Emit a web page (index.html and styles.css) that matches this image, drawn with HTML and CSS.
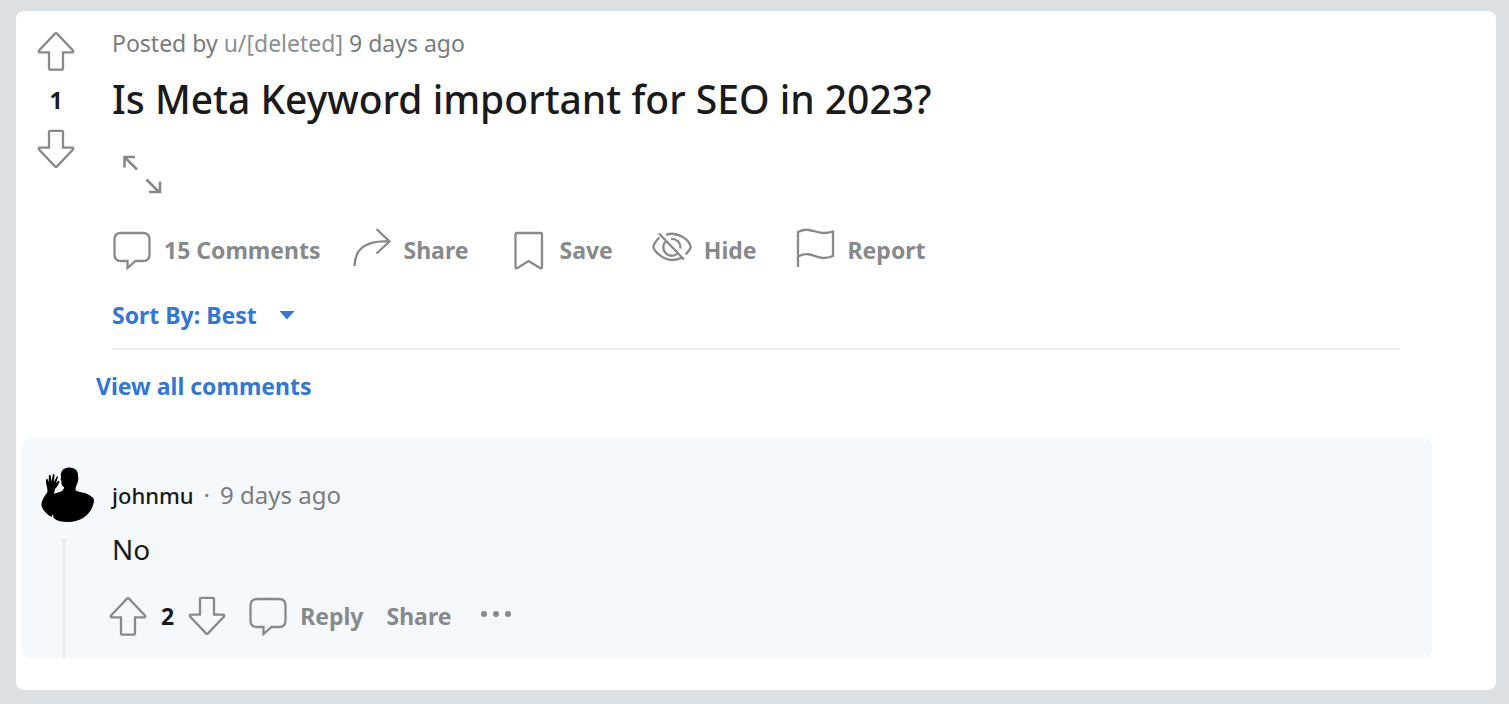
FILE: index.html
```html
<!DOCTYPE html>
<html lang="en">
<head>
    <meta charset="UTF-8">
    <meta name="viewport" content="width=device-width, initial-scale=1.0">
    <title>Is Meta Keyword important for SEO in 2023?</title>
    <link rel="stylesheet" href="styles.css">
</head>
<body>
    <!-- Shared icons -->
    <svg class="sprite" aria-hidden="true">
        <symbol id="arrow-up" viewBox="0 0 40 40">
            <path d="M19 2.6 Q20 1.6 21 2.6 L36.7 19.2 Q38 21.3 36 21.3 H27 V37 Q27 38.7 25.3 38.7 H14.7 Q13 38.7 13 37 V21.3 H4 Q2 21.3 3.3 19.2 Z"/>
        </symbol>
        <symbol id="arrow-down" viewBox="0 0 40 40">
            <path d="M19 37.4 Q20 38.4 21 37.4 L36.7 20.8 Q38 18.7 36 18.7 H27 V3 Q27 1.8 25.3 1.8 H14.7 Q13 1.8 13 3 V18.7 H4 Q2 18.7 3.3 20.8 Z"/>
        </symbol>
        <symbol id="bubble" viewBox="0 0 40 40">
            <path d="M9 3 H31 Q37.500 3 37.500 9.500 V24.500 Q37.500 31 31 31 H23.500 L15.500 38 V31 H9 Q2.500 31 2.500 24.500 V9.500 Q2.500 3 9 3 Z"/>
        </symbol>
    </svg>

    <main class="card">
        <article class="post">
            <div class="votes">
                <button class="icon-btn" type="button" aria-label="Upvote"><svg class="icon"><use href="#arrow-up"/></svg></button>
                <span class="score">1</span>
                <button class="icon-btn" type="button" aria-label="Downvote"><svg class="icon"><use href="#arrow-down"/></svg></button>
            </div>
            <div class="post-body">
                <p class="meta">Posted by <a class="author" href="#">u/[deleted]</a> 9 days ago</p>
                <h1 class="title">Is Meta Keyword important for SEO in 2023?</h1>
                <button class="icon-btn expand" type="button" aria-label="Expand">
                    <svg class="icon thick" viewBox="0 0 40 40"><path d="M15 15.500 L3.500 4 M2.500 13.500 V3 H13 M24.500 25.500 L36.500 37.500 M38 27.500 V38 H27"/></svg>
                </button>
                <div class="actions">
                    <button class="action comments" type="button"><svg class="icon"><use href="#bubble"/></svg>15 Comments</button>
                    <button class="action" type="button">
                        <svg class="icon" viewBox="0 0 40 40"><path d="M2.500 36 C3 20 12 10 37 11.500 M24.500 -1 L37.500 11.500 L24.500 23.500"/></svg>Share
                    </button>
                    <button class="action" type="button">
                        <svg class="icon" viewBox="0 0 40 40"><path d="M10 3 H33.500 Q35 3 35 4.500 V37 Q35 39 33 38 L21.500 31 L10.500 38 Q8.500 39 8.500 37 V4.500 Q8.500 3 10 3 Z"/></svg>Save
                    </button>
                    <button class="action" type="button">
                        <svg class="icon" viewBox="0 0 40 40"><path d="M7.500 7.500 C4 10.500 2 14 1.300 16.500 C2 22 12 30 20.500 30 C24 30 27 29 30 27.500 M14 4.800 C25 1 37 9 38.800 17 C38.300 19 36.500 22 33.500 24.200 M14 11 A8.300 8.300 0 1 0 25.500 23.500 M19 9 A8.300 8.300 0 0 1 28.300 18.500 M7 3.500 L32 29.500"/></svg>Hide
                    </button>
                    <button class="action" type="button">
                        <svg class="icon" viewBox="0 0 40 40"><path d="M2 37 V2 C16 -5 20 7 37 1.500 V26 C20 33 18 19 2 26.500"/></svg>Report
                    </button>
                </div>
                <div class="sort">
                    <button class="sort-btn" type="button">Sort By: Best
                        <svg class="caret" viewBox="0 0 16 10"><path d="M0.500 1 H15.500 L8 9.500 Z"/></svg>
                    </button>
                </div>
            </div>
        </article>

        <a class="view-all" href="#">View all comments</a>

        <section class="comment">
            <div class="thread">
                <svg class="avatar" viewBox="0 0 56 56" role="img" aria-label="johnmu">
                    <path d="M24 20 C22 19 21 17 21.500 14 C20 12 21 11 21 10 C20 4 24 0.500 29 0.500 C35 0.500 38.500 4 38 9 C38.800 12 38 14 37.500 16 C36.500 18.500 35.500 20 35.500 23 C37 25 42 25 45 26 C49 28 54 30 54 33 C53.500 43 45 55 28 55 C22 55 17 54 13.500 51 L13 47 L11.500 50 C6 47 3 43 1.500 39 C1 34 5 28 7 26 C8 24 7 20 6.500 18 C5.500 15 6 12 7 11.500 C8 12 8 14 8.500 15.500 L9 8 L10.500 8 L11.500 14.500 L13 7 L14.500 7.500 L14 15 L17 9 L18 10 L16 16 L19 13.500 L19.500 15 C18 18 17 20 15 22 L14 27 C18 25 24 25 24 20 Z"/>
                </svg>
                <div class="thread-line"></div>
            </div>
            <div class="comment-body">
                <p class="byline"><a class="user" href="#">johnmu</a><span>·</span><span>9 days ago</span></p>
                <p class="text">No</p>
                <div class="comment-actions">
                    <button class="icon-btn" type="button" aria-label="Upvote"><svg class="icon"><use href="#arrow-up"/></svg></button>
                    <span class="score">2</span>
                    <button class="icon-btn" type="button" aria-label="Downvote"><svg class="icon"><use href="#arrow-down"/></svg></button>
                    <button class="action reply" type="button"><svg class="icon"><use href="#bubble"/></svg>Reply</button>
                    <button class="action" type="button">Share</button>
                    <button class="icon-btn more" type="button" aria-label="More">
                        <svg class="icon dots" viewBox="0 0 40 40"><circle cx="8" cy="18" r="3"/><circle cx="20" cy="18" r="3"/><circle cx="32" cy="18" r="3"/></svg>
                    </button>
                </div>
            </div>
        </section>
    </main>
</body>
</html>
```
FILE: styles.css
```css
* { box-sizing: border-box; }
body { margin: 0; padding: 11px 13px 14px 16px; background-color: #dae0e4; color: #1a1a1b; font-family: "Noto Sans", sans-serif; font-size: 23px; line-height: 32px; }
p, h1 { margin: 0; }
a { color: inherit; text-decoration: none; }
button { padding: 0; border: 0; background: none; color: inherit; font: inherit; cursor: pointer; }

.sprite { position: absolute; width: 0; height: 0; }
.icon { flex: none; display: block; width: 40px; height: 40px; overflow: visible; fill: none; stroke: #878a8c; stroke-width: 2.3; }
.thick { stroke-width: 2.6; }
.dots { fill: #878a8c; stroke: none; }
.icon-btn { flex: none; display: block; width: 40px; height: 40px; }

.card { background-color: #fff; border-radius: 8px; padding: 16px 64px 32px 6px; }

.post { display: flex; padding-right: 32px; }
.votes { flex: none; display: flex; flex-direction: column; align-items: center; gap: 14px; width: 68px; margin-right: 22px; padding-top: 4px; }
.score { font-weight: 700; line-height: 30px; }
.post-body { flex: 1; min-width: 0; }
.meta { color: #787c7e; }
.author { color: #8c8f91; }
.title { margin-top: 16px; font-size: 39px; font-weight: 500; line-height: 48px; }
.expand { margin: 31px 0 36px 10px; }
.actions { display: flex; flex-wrap: wrap; gap: 31px; }
.action { display: flex; align-items: center; gap: 12px; color: #878a8c; font-weight: 700; line-height: 40px; }
.actions .action { padding-right: 8px; }
.actions .comments { padding-right: 0; }
.sort { margin-top: 29px; padding-bottom: 17px; border-bottom: 2px solid #edeff1; }
.sort-btn { display: flex; align-items: center; gap: 22px; color: #3377d0; font-weight: 700; }
.caret { width: 16px; height: 10px; fill: #3377d0; }

.view-all { display: block; margin: 20px 0 36px 74px; color: #3377d0; font-weight: 700; }

.comment { display: flex; gap: 12px; padding-left: 16px; background-color: #f5f8fd; border-radius: 8px; }
.thread { flex: none; display: flex; flex-direction: column; gap: 15px; width: 60px; padding-top: 29px; }
.avatar { flex: none; width: 56px; height: 56px; margin-left: 2px; }
.thread-line { flex: 1; width: 4px; margin-left: 24px; background-color: #edeff1; }
.comment-body { flex: 1; padding: 41px 0 22px 2px; }
.byline { display: flex; align-items: baseline; gap: 10px; color: #7c7c7c; font-size: 24px; }
.user { color: #1a1a1b; font-size: 22px; font-weight: 500; }
.text { margin-top: 22px; font-size: 28px; }
.comment-actions { display: flex; align-items: center; gap: 13px; margin: 31px 0 0 -4px; }
.reply { margin: 0 10px 0 8px; }
.more { margin-left: 12px; }
```
